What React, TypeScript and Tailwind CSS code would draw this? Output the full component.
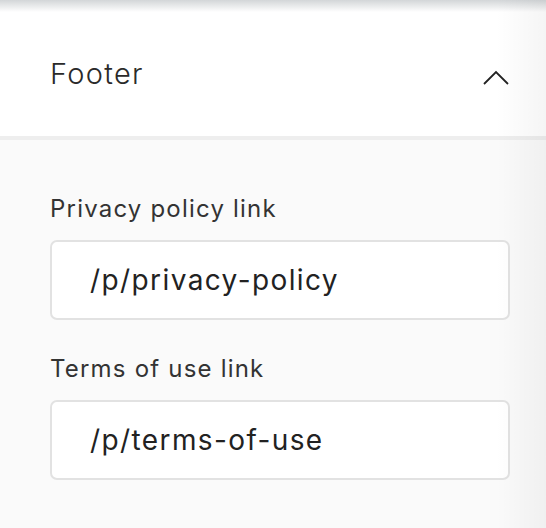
import { useState } from "react";

const FONT = { fontFamily: "Inter, 'Noto Sans', sans-serif" };

function Field({ label, value }: { label: string; value: string }) {
  const [v, setV] = useState(value);
  return (
    <div className="flex flex-col">
      <label className="text-[24px] leading-[32px] tracking-[0.05em] text-[#333333]">{label}</label>
      <input
        value={v}
        onChange={(e) => setV(e.target.value)}
        className="mt-[15px] h-[80px] w-full rounded-[7px] border-2 border-[#e2e2e2] bg-white pl-[38px] text-[28px] tracking-[0.05em] text-[#222222] outline-none"
      />
    </div>
  );
}

export default function App() {
  const [open, setOpen] = useState(true);

  return (
    <div className="relative h-[528px] w-[546px] overflow-hidden bg-[#fafafa]" style={FONT}>
      {/* shadow from the panel above */}
      <div className="h-[12px] bg-gradient-to-b from-[#d3d6d8] to-white" />

      {/* Header */}
      <button
        onClick={() => setOpen(!open)}
        className="flex h-[124px] w-full items-center justify-between bg-white pl-[50px] pr-[37px]"
      >
        <span className="text-[29px] font-light tracking-[0.045em] text-[#2a2a2a]">Footer</span>
        <svg width="26" height="15" viewBox="0 0 26 15" fill="none" className="mt-[6px]">
          <path d="M1 14 L13 2 L25 14" stroke="#222222" strokeWidth="1.8" />
        </svg>
      </button>
      <div className="h-[4px] bg-[#eeeeee]" />

      {open && (
        <div className="flex flex-col gap-[33px] pl-[50px] pr-[36px] pt-[53px]">
          <Field label="Privacy policy link" value="/p/privacy-policy" />
          <Field label="Terms of use link" value="/p/terms-of-use" />
        </div>
      )}

      {/* faint edge shading on the right */}
      <div className="pointer-events-none absolute inset-y-0 right-0 w-[50px] bg-gradient-to-r from-transparent to-black/[0.04]" />
    </div>
  );
}
